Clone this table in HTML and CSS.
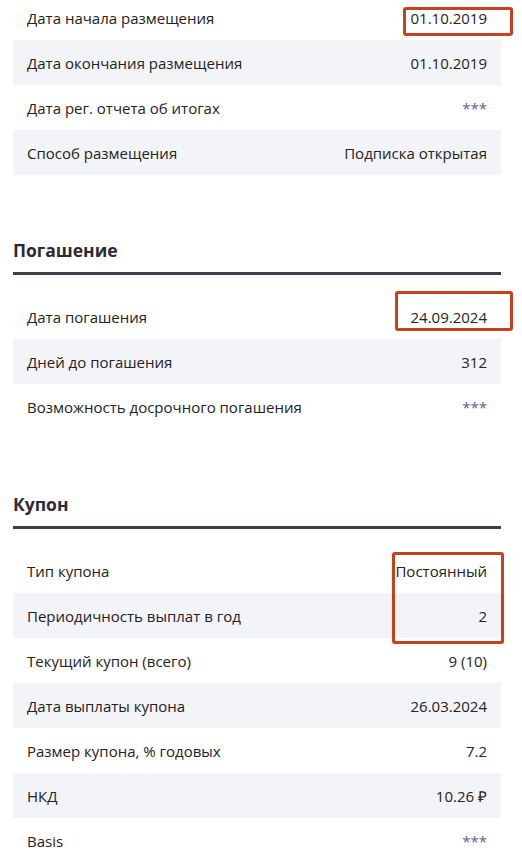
FILE: index.html
```html
<!DOCTYPE html>
<html>
<head>
    <meta charset="utf-8">
    <title>Параметры выпуска</title>
    <link rel="stylesheet" href="styles.css">
</head>
<body>
<div class="page">
    <div class="rows">
        <div class="row"><span class="label">Дата начала размещения</span><span class="value">01.10.2019</span></div>
        <div class="row"><span class="label">Дата окончания размещения</span><span class="value">01.10.2019</span></div>
        <div class="row"><span class="label">Дата рег. отчета об итогах</span><span class="value stars">***</span></div>
        <div class="row"><span class="label">Способ размещения</span><span class="value">Подписка открытая</span></div>
    </div>

    <div class="section">
        <h2 class="section-title">Погашение</h2>
        <div class="rows">
            <div class="row"><span class="label">Дата погашения</span><span class="value">24.09.2024</span></div>
            <div class="row"><span class="label">Дней до погашения</span><span class="value">312</span></div>
            <div class="row"><span class="label">Возможность досрочного погашения</span><span class="value stars">***</span></div>
        </div>
    </div>

    <div class="section">
        <h2 class="section-title">Купон</h2>
        <div class="rows">
            <div class="row"><span class="label">Тип купона</span><span class="value">Постоянный</span></div>
            <div class="row"><span class="label">Периодичность выплат в год</span><span class="value">2</span></div>
            <div class="row"><span class="label">Текущий купон (всего)</span><span class="value">9 (10)</span></div>
            <div class="row"><span class="label">Дата выплаты купона</span><span class="value">26.03.2024</span></div>
            <div class="row"><span class="label">Размер купона, % годовых</span><span class="value">7.2</span></div>
            <div class="row"><span class="label">НКД</span><span class="value">10.26 ₽</span></div>
            <div class="row"><span class="label">Basis</span><span class="value stars">***</span></div>
        </div>
    </div>

    <!-- пометки поверх таблицы -->
    <div class="mark mark-1"></div>
    <div class="mark mark-2"></div>
    <div class="mark mark-3"></div>
</div>
</body>
</html>
```

FILE: styles.css
```css
body {
    margin: 0;
    background: #fff;
    font-family: "Open Sans", "Liberation Sans", sans-serif;
    color: #222;
}

.page {
    position: relative;
    margin-top: -5px;
    padding: 0 21px 0 13px;
}

.rows {
    display: flex;
    flex-direction: column;
}

.row {
    display: flex;
    justify-content: space-between;
    align-items: center;
    height: 45px;
    padding: 0 14px;
    font-size: 15px;
}

.row:nth-child(even) {
    background: #f3f4f8;
}

.stars {
    color: #5b6290;
}

.section {
    padding-top: 63px;
}

.section-title {
    margin: 0;
    font-size: 17.5px;
    font-weight: 700;
    line-height: 24px;
    color: #2b2b33;
    padding-bottom: 10px;
    border-bottom: 3px solid #3f404d;
    margin-bottom: 19px;
}

.mark {
    position: absolute;
    box-sizing: border-box;
    border: 3px solid #c9401f;
    border-radius: 3px;
}

.mark-1 {
    top: 12px;
    left: 403px;
    width: 110px;
    height: 29px;
}

.mark-2 {
    top: 296px;
    left: 395px;
    width: 118px;
    height: 40px;
}

.mark-3 {
    top: 557px;
    left: 392px;
    width: 112px;
    height: 92px;
}
```
